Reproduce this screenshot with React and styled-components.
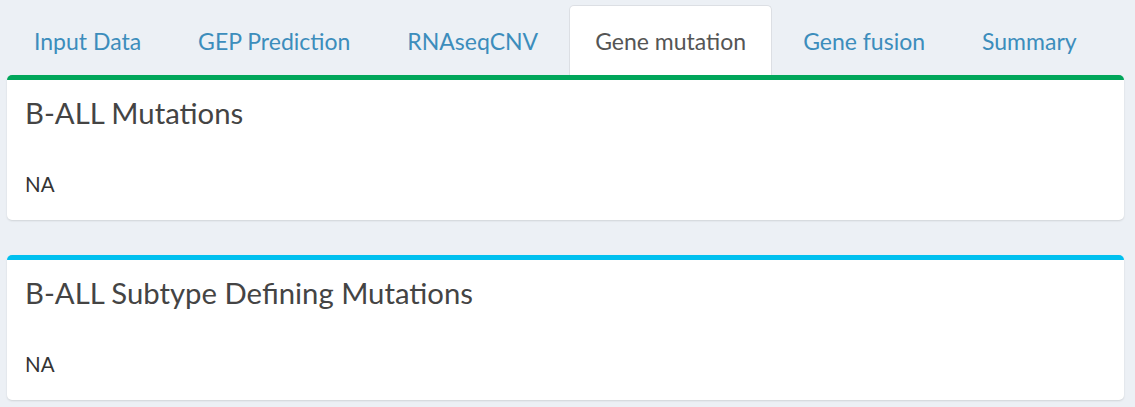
import React, { useState } from "react";
import styled, { createGlobalStyle } from "styled-components";

const GlobalStyle = createGlobalStyle`
  html, body {
    margin: 0;
    padding: 0;
    background: #ecf0f5;
    font-family: "Lato", "Open Sans", sans-serif;
  }
`;

const Page = styled.div`
  width: 1135px;
  height: 407px;
  overflow: hidden;
  background: #ecf0f5;
`;

const TabBar = styled.ul`
  margin: 0 0 0 8px;
  padding: 5px 0 0;
  list-style: none;
  display: flex;
  gap: 5px;
  height: 70px;
  box-sizing: content-box;
`;

const TabItem = styled.li`
  flex-shrink: 0;
  white-space: nowrap;
  height: 70px;
  box-sizing: border-box;
  padding: 0 25px;
  display: flex;
  align-items: center;
  font-size: 23px;
  cursor: pointer;
  border-radius: 5px 5px 0 0;
  border: 1px solid ${({ $active }) => ($active ? "#dcdfe4" : "transparent")};
  border-bottom: none;
  background: ${({ $active }) => ($active ? "#fff" : "transparent")};
  color: ${({ $active }) => ($active ? "#555" : "#3c8dbc")};
`;

const Content = styled.div`
  padding: 0 11px 0 7px;
  display: flex;
  flex-direction: column;
  gap: 35px;
`;

const Card = styled.section`
  background: #fff;
  border-top: 5px solid ${({ $color }) => $color};
  border-radius: 5px;
  box-shadow: 0 1px 2px rgba(0, 0, 0, 0.12);
  height: 145px;
  box-sizing: border-box;
  padding: 0 18px;
  display: flex;
  flex-direction: column;
`;

const CardTitle = styled.h3`
  margin: 0;
  padding-top: 13px;
  font-size: 29.3px;
  line-height: 40px;
  font-weight: 400;
  color: #444;
`;

const CardBody = styled.div`
  margin-top: 39px;
  font-size: 20.5px;
  line-height: 24px;
  color: #333;
`;

const tabs = [
  "Input Data",
  "GEP Prediction",
  "RNAseqCNV",
  "Gene mutation",
  "Gene fusion",
  "Summary",
];

const cards = [
  { title: "B-ALL Mutations", color: "#00a65a", body: "NA" },
  { title: "B-ALL Subtype Defining Mutations", color: "#00c0ef", body: "NA" },
];

const App = () => {
  const [active, setActive] = useState("Gene mutation");

  return (
    <Page>
      <GlobalStyle />
      <TabBar>
        {tabs.map((t) => (
          <TabItem key={t} $active={active === t} onClick={() => setActive(t)}>
            {t}
          </TabItem>
        ))}
      </TabBar>
      <Content>
        {cards.map((c) => (
          <Card key={c.title} $color={c.color}>
            <CardTitle>{c.title}</CardTitle>
            <CardBody>{c.body}</CardBody>
          </Card>
        ))}
      </Content>
    </Page>
  );
};

export default App;
